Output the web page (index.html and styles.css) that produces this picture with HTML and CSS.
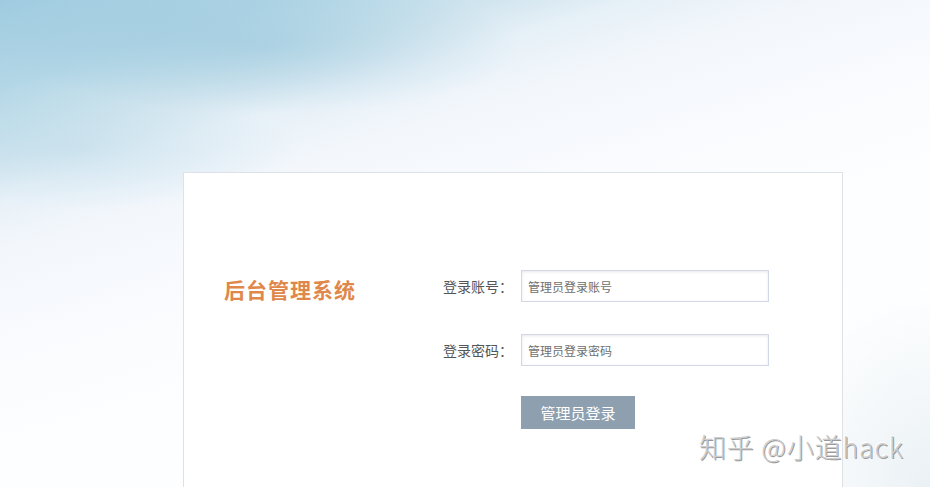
FILE: index.html
```html
<!DOCTYPE html>
<html lang="zh-CN">
<head>
<meta charset="utf-8">
<title>后台管理系统</title>
<link rel="stylesheet" href="styles.css">
</head>
<body>
<div class="page">
  <div class="card">
    <div class="brand">后台管理系统</div>
    <form class="form">
      <div class="row">
        <label class="label">登录账号：</label>
        <input class="input" type="text" placeholder="管理员登录账号">
      </div>
      <div class="row">
        <label class="label">登录密码：</label>
        <input class="input" type="text" placeholder="管理员登录密码">
      </div>
      <div class="row actions">
        <button class="btn" type="button">管理员登录</button>
      </div>
    </form>
  </div>
  <div class="watermark">知乎 @小道hack</div>
</div>
</body>
</html>
```

FILE: styles.css
```css
* { box-sizing: border-box; }
html, body { margin: 0; padding: 0; }
body {
  font-family: "Noto Sans CJK SC", "Noto Sans", sans-serif;
  overflow: hidden;
}
.page {
  position: relative;
  width: 930px;
  height: 487px;
  overflow: hidden;
  padding-top: 172px;
  padding-left: 183px;
  background:
    radial-gradient(ellipse 260px 70px at 260px 45px, rgba(140, 192, 216, 0.45), rgba(140, 192, 216, 0) 100%),
    radial-gradient(ellipse 220px 60px at 80px 150px, rgba(170, 210, 228, 0.35), rgba(170, 210, 228, 0) 100%),
    radial-gradient(ellipse 160px 200px at 930px 487px, rgba(225, 235, 240, 0.7), rgba(225, 235, 240, 0) 100%),
    linear-gradient(163deg, #9fcbe0 0%, #b2d6e6 11%, #cfe4ee 19%, #e6f0f7 25%, #f3f7fc 33%, #f9fbfe 45%, #fdfeff 60%, #ffffff 100%);
}
.card {
  width: 660px;
  height: 360px;
  background: #fff;
  border: 1px solid #dde2e7;
  display: flex;
  padding-top: 97px;
  padding-left: 40px;
}
.brand {
  width: 219px;
  margin-top: 3px;
  font-size: 21px;
  font-weight: bold;
  line-height: 32px;
  color: #e0884a;
  letter-spacing: 1px;
}
.form {
  display: flex;
  flex-direction: column;
  gap: 32px;
  margin: 0;
}
.row {
  display: flex;
  align-items: center;
  height: 32px;
}
.label {
  width: 78px;
  font-size: 14px;
  color: #555;
  line-height: 32px;
}
.input {
  width: 248px;
  height: 32px;
  margin: 0;
  border: 1px solid #d2d8e6;
  box-shadow: inset 0 1px 3px rgba(120, 130, 150, 0.18);
  padding: 0 6px;
  font-family: inherit;
  font-size: 12px;
  color: #333;
  background: #fff;
  outline: none;
}
.input::placeholder { color: #6f6f6f; }
.actions {
  margin-top: -2px;
  padding-left: 78px;
  height: 33px;
}
.btn {
  width: 114px;
  height: 33px;
  border: 0;
  margin: 0;
  padding: 0;
  background: #8e9fb0;
  color: #fff;
  font-family: inherit;
  font-size: 15px;
  cursor: pointer;
}
.watermark {
  position: absolute;
  left: 699px;
  top: 428px;
  font-size: 27px;
  line-height: 38px;
  letter-spacing: 0.8px;
  color: #cdcdcd;
  text-shadow: 1px 1px 0 #9a9a9a, -1px -1px 0 #ffffff;
  white-space: nowrap;
  font-family: "Noto Sans CJK SC", sans-serif;
  font-weight: 300;
}
```
